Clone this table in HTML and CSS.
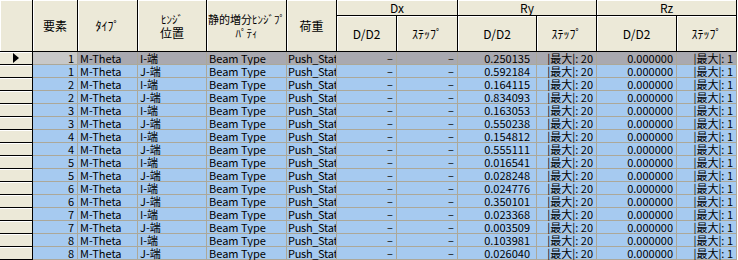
FILE: index.html
```html
<!DOCTYPE html>
<html lang="ja">
<head>
<meta charset="utf-8">
<link rel="stylesheet" href="styles.css">
</head>
<body>
<div class="grid">
  <div class="h corner"></div>
  <div class="h span2">要素</div>
  <div class="h span2">ﾀｲﾌﾟ</div>
  <div class="h span2 two"><span class="small">ﾋﾝｼﾞ</span><span>位置</span></div>
  <div class="h span2 two narrow"><span>静的増分ﾋﾝｼﾞﾌﾟ</span><span>ﾊﾟﾃｨ</span></div>
  <div class="h span2">荷重</div>
  <div class="h group">Dx</div>
  <div class="h group">Ry</div>
  <div class="h group">Rz</div>
  <div class="h sub">D/D2</div>
  <div class="h sub">ｽﾃｯﾌﾟ</div>
  <div class="h sub">D/D2</div>
  <div class="h sub">ｽﾃｯﾌﾟ</div>
  <div class="h sub">D/D2</div>
  <div class="h sub">ｽﾃｯﾌﾟ</div>

  <div class="rh"><span class="arrow"></span></div>
  <div class="c r sel key">1</div><div class="c l sel">M-Theta</div><div class="c l sel">I-端</div><div class="c l sel">Beam Type</div><div class="c l sel ld">Push_Stat</div><div class="c r sel">–</div><div class="c r sel">–</div><div class="c r sel ry">0.250135</div><div class="c r sel">|最大|: 20</div><div class="c r sel">0.000000</div><div class="c r sel">|最大|: 1</div>

  <div class="rh"></div>
  <div class="c r">1</div><div class="c l">M-Theta</div><div class="c l">J-端</div><div class="c l">Beam Type</div><div class="c l ld">Push_Stat</div><div class="c r">–</div><div class="c r">–</div><div class="c r ry">0.592184</div><div class="c r">|最大|: 20</div><div class="c r">0.000000</div><div class="c r">|最大|: 1</div>

  <div class="rh"></div>
  <div class="c r">2</div><div class="c l">M-Theta</div><div class="c l">I-端</div><div class="c l">Beam Type</div><div class="c l ld">Push_Stat</div><div class="c r">–</div><div class="c r">–</div><div class="c r ry">0.164115</div><div class="c r">|最大|: 20</div><div class="c r">0.000000</div><div class="c r">|最大|: 1</div>

  <div class="rh"></div>
  <div class="c r">2</div><div class="c l">M-Theta</div><div class="c l">J-端</div><div class="c l">Beam Type</div><div class="c l ld">Push_Stat</div><div class="c r">–</div><div class="c r">–</div><div class="c r ry">0.834093</div><div class="c r">|最大|: 20</div><div class="c r">0.000000</div><div class="c r">|最大|: 1</div>

  <div class="rh"></div>
  <div class="c r">3</div><div class="c l">M-Theta</div><div class="c l">I-端</div><div class="c l">Beam Type</div><div class="c l ld">Push_Stat</div><div class="c r">–</div><div class="c r">–</div><div class="c r ry">0.163053</div><div class="c r">|最大|: 20</div><div class="c r">0.000000</div><div class="c r">|最大|: 1</div>

  <div class="rh"></div>
  <div class="c r">3</div><div class="c l">M-Theta</div><div class="c l">J-端</div><div class="c l">Beam Type</div><div class="c l ld">Push_Stat</div><div class="c r">–</div><div class="c r">–</div><div class="c r ry">0.550238</div><div class="c r">|最大|: 20</div><div class="c r">0.000000</div><div class="c r">|最大|: 1</div>

  <div class="rh"></div>
  <div class="c r">4</div><div class="c l">M-Theta</div><div class="c l">I-端</div><div class="c l">Beam Type</div><div class="c l ld">Push_Stat</div><div class="c r">–</div><div class="c r">–</div><div class="c r ry">0.154812</div><div class="c r">|最大|: 20</div><div class="c r">0.000000</div><div class="c r">|最大|: 1</div>

  <div class="rh"></div>
  <div class="c r">4</div><div class="c l">M-Theta</div><div class="c l">J-端</div><div class="c l">Beam Type</div><div class="c l ld">Push_Stat</div><div class="c r">–</div><div class="c r">–</div><div class="c r ry">0.555111</div><div class="c r">|最大|: 20</div><div class="c r">0.000000</div><div class="c r">|最大|: 1</div>

  <div class="rh"></div>
  <div class="c r">5</div><div class="c l">M-Theta</div><div class="c l">I-端</div><div class="c l">Beam Type</div><div class="c l ld">Push_Stat</div><div class="c r">–</div><div class="c r">–</div><div class="c r ry">0.016541</div><div class="c r">|最大|: 20</div><div class="c r">0.000000</div><div class="c r">|最大|: 1</div>

  <div class="rh"></div>
  <div class="c r">5</div><div class="c l">M-Theta</div><div class="c l">J-端</div><div class="c l">Beam Type</div><div class="c l ld">Push_Stat</div><div class="c r">–</div><div class="c r">–</div><div class="c r ry">0.028248</div><div class="c r">|最大|: 20</div><div class="c r">0.000000</div><div class="c r">|最大|: 1</div>

  <div class="rh"></div>
  <div class="c r">6</div><div class="c l">M-Theta</div><div class="c l">I-端</div><div class="c l">Beam Type</div><div class="c l ld">Push_Stat</div><div class="c r">–</div><div class="c r">–</div><div class="c r ry">0.024776</div><div class="c r">|最大|: 20</div><div class="c r">0.000000</div><div class="c r">|最大|: 1</div>

  <div class="rh"></div>
  <div class="c r">6</div><div class="c l">M-Theta</div><div class="c l">J-端</div><div class="c l">Beam Type</div><div class="c l ld">Push_Stat</div><div class="c r">–</div><div class="c r">–</div><div class="c r ry">0.350101</div><div class="c r">|最大|: 20</div><div class="c r">0.000000</div><div class="c r">|最大|: 1</div>

  <div class="rh"></div>
  <div class="c r">7</div><div class="c l">M-Theta</div><div class="c l">I-端</div><div class="c l">Beam Type</div><div class="c l ld">Push_Stat</div><div class="c r">–</div><div class="c r">–</div><div class="c r ry">0.023368</div><div class="c r">|最大|: 20</div><div class="c r">0.000000</div><div class="c r">|最大|: 1</div>

  <div class="rh"></div>
  <div class="c r">7</div><div class="c l">M-Theta</div><div class="c l">J-端</div><div class="c l">Beam Type</div><div class="c l ld">Push_Stat</div><div class="c r">–</div><div class="c r">–</div><div class="c r ry">0.003509</div><div class="c r">|最大|: 20</div><div class="c r">0.000000</div><div class="c r">|最大|: 1</div>

  <div class="rh"></div>
  <div class="c r">8</div><div class="c l">M-Theta</div><div class="c l">I-端</div><div class="c l">Beam Type</div><div class="c l ld">Push_Stat</div><div class="c r">–</div><div class="c r">–</div><div class="c r ry">0.103981</div><div class="c r">|最大|: 20</div><div class="c r">0.000000</div><div class="c r">|最大|: 1</div>

  <div class="rh"></div>
  <div class="c r">8</div><div class="c l">M-Theta</div><div class="c l">J-端</div><div class="c l">Beam Type</div><div class="c l ld">Push_Stat</div><div class="c r">–</div><div class="c r">–</div><div class="c r ry">0.026040</div><div class="c r">|最大|: 20</div><div class="c r">0.000000</div><div class="c r">|最大|: 1</div>
</div>
</body>
</html>
```
FILE: styles.css
```css
body { margin: 0; overflow: hidden; background: #fff; }
.grid {
  display: grid;
  width: max-content;
  grid-template-columns: 33px 45px 60px 69px 80px 50px 60px 61px 79px 60px 80px 60px;
  grid-template-rows: 16px 36px;
  grid-auto-rows: 13px;
  font-family: "Noto Sans CJK JP", sans-serif;
  color: #000;
}
.h {
  box-sizing: border-box;
  background: #ECE9D8;
  border-right: 1px solid #000;
  border-bottom: 1px solid #000;
  box-shadow: inset 1px 1px 0 #fff;
  font-size: 12px;
  line-height: 14px;
  display: flex;
  align-items: center;
  justify-content: center;
  white-space: nowrap;
  overflow: hidden;
}
.span2 { grid-row: 1 / span 2; }
.corner { grid-row: 1 / span 2; }
.group { grid-column: span 2; }
.two { flex-direction: column; }
.small { font-size: 11px; }
.narrow { font-size: 11px; }

.rh {
  box-sizing: border-box;
  background: #ECE9D8;
  border-right: 1px solid #000;
  border-bottom: 1px solid #000;
  box-shadow: inset 0 1px 0 #fff;
  display: flex;
  align-items: center;
  justify-content: center;
}
.arrow {
  width: 0;
  height: 0;
  border-left: 6px solid #000;
  border-top: 5px solid transparent;
  border-bottom: 5px solid transparent;
}
.c {
  box-sizing: border-box;
  background: #A6CAF0;
  border-right: 1px solid #ACA899;
  border-bottom: 1px solid #ACA899;
  font-size: 11px;
  line-height: 12px;
  white-space: nowrap;
  overflow-x: clip;
  overflow-y: visible;
  padding: 0 3px 0 2px;
}
.r { text-align: right; }
.l { text-align: left; }
.ld { letter-spacing: -0.3px; padding-left: 1px; }
.ry { padding-right: 6px; }
.sel { background: #A9A9B0; }
.key { background: #C8C8C8; }
```
